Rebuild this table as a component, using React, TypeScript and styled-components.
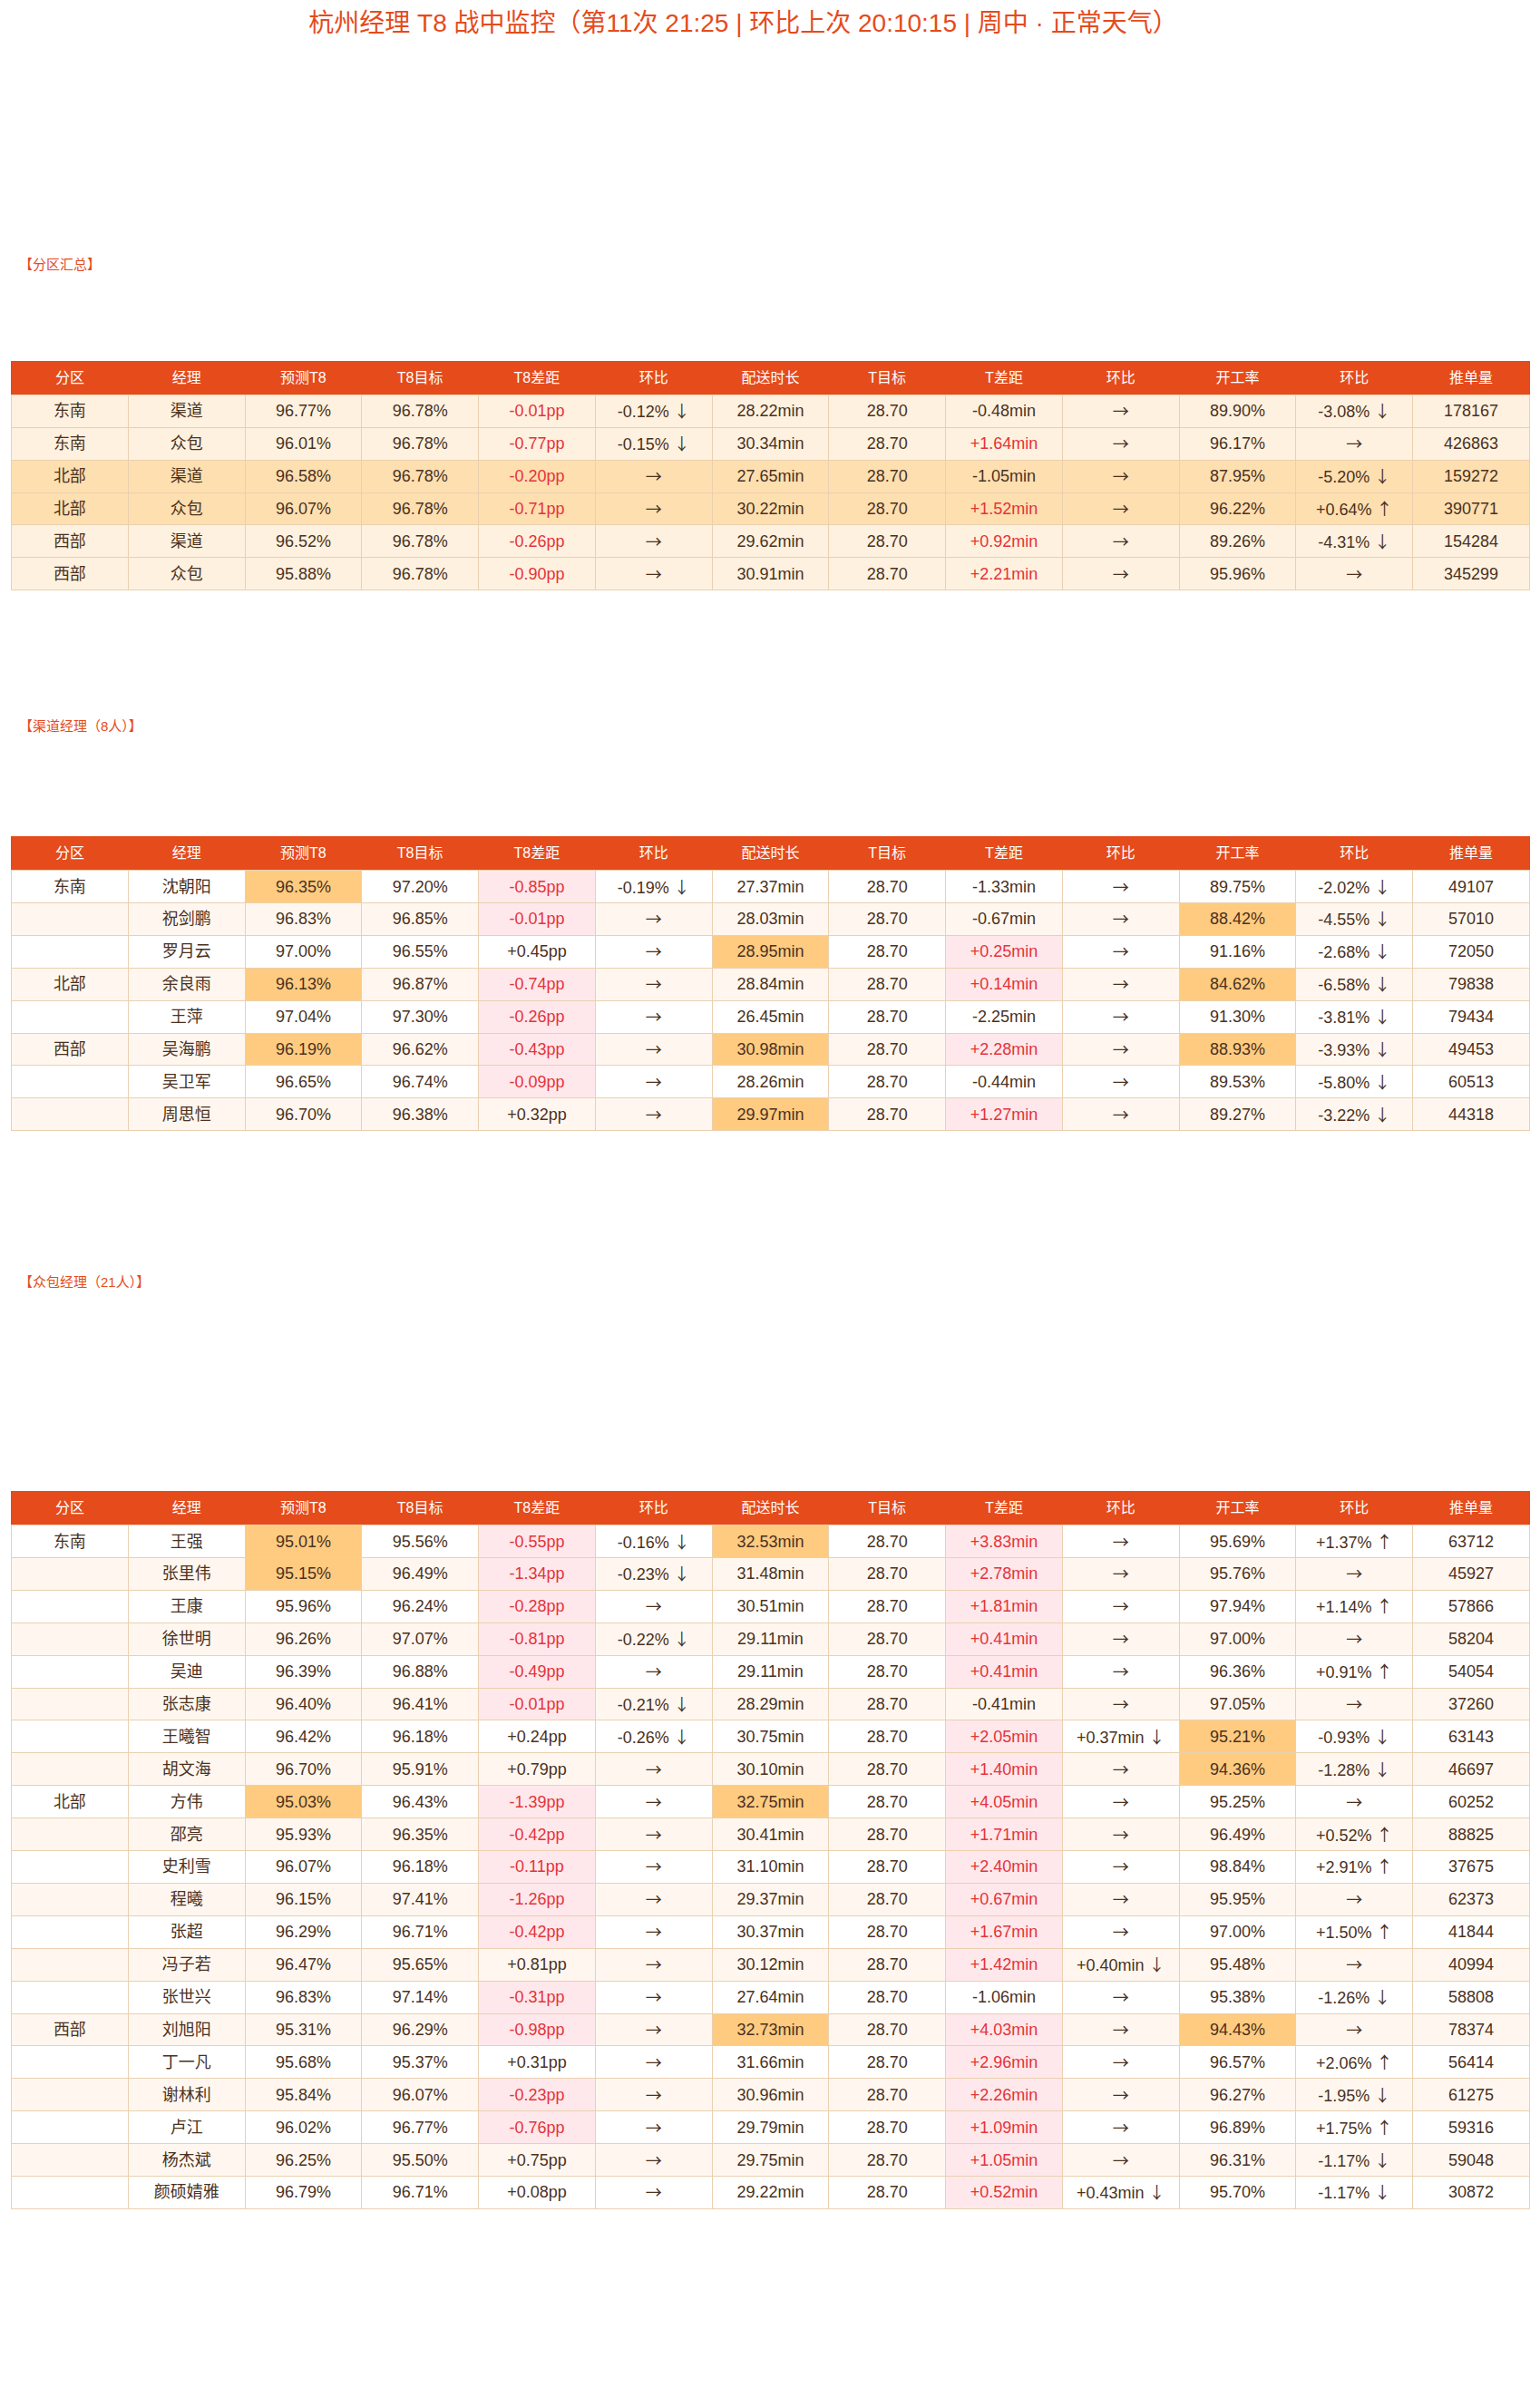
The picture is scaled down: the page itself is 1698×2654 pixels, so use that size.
import React from "react";
import styled, { createGlobalStyle, css } from "styled-components";

const GlobalStyle = createGlobalStyle`
	html, body {
		margin: 0;
		padding: 0;
		background: #ffffff;
	}
	body {
		font-family: "Liberation Sans", "Noto Sans CJK SC", sans-serif;
		color: #4a3122;
	}
`;

const ORANGE = "#e54b1b";

const Page = styled.div`
	width: 1698px;
	min-height: 2654px;
	box-sizing: border-box;
	padding: 10px 11px 0 12px;
`;

const Title = styled.h1`
	margin: 0;
	padding-right: 60px;
	text-align: center;
	font-size: 28px;
	line-height: 32px;
	font-weight: normal;
	color: ${ORANGE};
`;

const Section = styled.section<{ $above: number }>`
	margin-top: ${(p) => p.$above}px;
`;

const Label = styled.div<{ $below: number }>`
	padding-left: 9px;
	font-size: 15px;
	line-height: 20px;
	color: ${ORANGE};
	margin-bottom: ${(p) => p.$below}px;
`;

const Table = styled.table`
	width: 100%;
	border-collapse: collapse;
	table-layout: fixed;
	font-size: 18px;
	line-height: 20px;
`;

const HeadCell = styled.th`
	height: 35.9px;
	padding: 0;
	background: ${ORANGE};
	color: #ffffff;
	font-weight: normal;
	font-size: 16px;
	border: 1px solid ${ORANGE};
	border-bottom-color: #ecd2b2;
`;

const Row = styled.tr<{ $bg: string }>`
	height: 35.9px;
	background: ${(p) => p.$bg};
`;

const Cell = styled.td<{ $mark?: "hot" | "warn" | "red" }>`
	padding: 0;
	text-align: center;
	white-space: nowrap;
	border: 1px solid #ead0b0;
	color: #4a3122;
	${(p) =>
		p.$mark === "hot" &&
		css`
			background: #fecb80;
		`}
	${(p) =>
		p.$mark === "warn" &&
		css`
			background: #fee8eb;
			color: #e5333a;
		`}
	${(p) =>
		p.$mark === "red" &&
		css`
			color: #e5333a;
		`}
`;

const Arrow = styled.span`
	font-family: "Noto Sans CJK SC", sans-serif;
	font-size: 18px;
	line-height: 20px;
`;

const HEADERS = [
	"分区",
	"经理",
	"预测T8",
	"T8目标",
	"T8差距",
	"环比",
	"配送时长",
	"T目标",
	"T差距",
	"环比",
	"开工率",
	"环比",
	"推单量",
];

// summary rows: cells + tone
const SUMMARY: { cells: string[]; deep?: boolean }[] = [
	{ cells: ["东南", "渠道", "96.77%", "96.78%", "-0.01pp", "-0.12% ↓", "28.22min", "28.70", "-0.48min", "→", "89.90%", "-3.08% ↓", "178167"] },
	{ cells: ["东南", "众包", "96.01%", "96.78%", "-0.77pp", "-0.15% ↓", "30.34min", "28.70", "+1.64min", "→", "96.17%", "→", "426863"] },
	{ cells: ["北部", "渠道", "96.58%", "96.78%", "-0.20pp", "→", "27.65min", "28.70", "-1.05min", "→", "87.95%", "-5.20% ↓", "159272"], deep: true },
	{ cells: ["北部", "众包", "96.07%", "96.78%", "-0.71pp", "→", "30.22min", "28.70", "+1.52min", "→", "96.22%", "+0.64% ↑", "390771"], deep: true },
	{ cells: ["西部", "渠道", "96.52%", "96.78%", "-0.26pp", "→", "29.62min", "28.70", "+0.92min", "→", "89.26%", "-4.31% ↓", "154284"] },
	{ cells: ["西部", "众包", "95.88%", "96.78%", "-0.90pp", "→", "30.91min", "28.70", "+2.21min", "→", "95.96%", "→", "345299"] },
];

type ManagerRow = { cells: string[]; hot?: number[] };

const CHANNEL: ManagerRow[] = [
	{ cells: ["东南", "沈朝阳", "96.35%", "97.20%", "-0.85pp", "-0.19% ↓", "27.37min", "28.70", "-1.33min", "→", "89.75%", "-2.02% ↓", "49107"], hot: [2] },
	{ cells: ["", "祝剑鹏", "96.83%", "96.85%", "-0.01pp", "→", "28.03min", "28.70", "-0.67min", "→", "88.42%", "-4.55% ↓", "57010"], hot: [10] },
	{ cells: ["", "罗月云", "97.00%", "96.55%", "+0.45pp", "→", "28.95min", "28.70", "+0.25min", "→", "91.16%", "-2.68% ↓", "72050"], hot: [6] },
	{ cells: ["北部", "余良雨", "96.13%", "96.87%", "-0.74pp", "→", "28.84min", "28.70", "+0.14min", "→", "84.62%", "-6.58% ↓", "79838"], hot: [2, 10] },
	{ cells: ["", "王萍", "97.04%", "97.30%", "-0.26pp", "→", "26.45min", "28.70", "-2.25min", "→", "91.30%", "-3.81% ↓", "79434"] },
	{ cells: ["西部", "吴海鹏", "96.19%", "96.62%", "-0.43pp", "→", "30.98min", "28.70", "+2.28min", "→", "88.93%", "-3.93% ↓", "49453"], hot: [2, 6, 10] },
	{ cells: ["", "吴卫军", "96.65%", "96.74%", "-0.09pp", "→", "28.26min", "28.70", "-0.44min", "→", "89.53%", "-5.80% ↓", "60513"] },
	{ cells: ["", "周思恒", "96.70%", "96.38%", "+0.32pp", "→", "29.97min", "28.70", "+1.27min", "→", "89.27%", "-3.22% ↓", "44318"], hot: [6] },
];

const CROWD: ManagerRow[] = [
	{ cells: ["东南", "王强", "95.01%", "95.56%", "-0.55pp", "-0.16% ↓", "32.53min", "28.70", "+3.83min", "→", "95.69%", "+1.37% ↑", "63712"], hot: [2, 6] },
	{ cells: ["", "张里伟", "95.15%", "96.49%", "-1.34pp", "-0.23% ↓", "31.48min", "28.70", "+2.78min", "→", "95.76%", "→", "45927"], hot: [2] },
	{ cells: ["", "王康", "95.96%", "96.24%", "-0.28pp", "→", "30.51min", "28.70", "+1.81min", "→", "97.94%", "+1.14% ↑", "57866"] },
	{ cells: ["", "徐世明", "96.26%", "97.07%", "-0.81pp", "-0.22% ↓", "29.11min", "28.70", "+0.41min", "→", "97.00%", "→", "58204"] },
	{ cells: ["", "吴迪", "96.39%", "96.88%", "-0.49pp", "→", "29.11min", "28.70", "+0.41min", "→", "96.36%", "+0.91% ↑", "54054"] },
	{ cells: ["", "张志康", "96.40%", "96.41%", "-0.01pp", "-0.21% ↓", "28.29min", "28.70", "-0.41min", "→", "97.05%", "→", "37260"] },
	{ cells: ["", "王曦智", "96.42%", "96.18%", "+0.24pp", "-0.26% ↓", "30.75min", "28.70", "+2.05min", "+0.37min ↓", "95.21%", "-0.93% ↓", "63143"], hot: [10] },
	{ cells: ["", "胡文海", "96.70%", "95.91%", "+0.79pp", "→", "30.10min", "28.70", "+1.40min", "→", "94.36%", "-1.28% ↓", "46697"], hot: [10] },
	{ cells: ["北部", "方伟", "95.03%", "96.43%", "-1.39pp", "→", "32.75min", "28.70", "+4.05min", "→", "95.25%", "→", "60252"], hot: [2, 6] },
	{ cells: ["", "邵亮", "95.93%", "96.35%", "-0.42pp", "→", "30.41min", "28.70", "+1.71min", "→", "96.49%", "+0.52% ↑", "88825"] },
	{ cells: ["", "史利雪", "96.07%", "96.18%", "-0.11pp", "→", "31.10min", "28.70", "+2.40min", "→", "98.84%", "+2.91% ↑", "37675"] },
	{ cells: ["", "程曦", "96.15%", "97.41%", "-1.26pp", "→", "29.37min", "28.70", "+0.67min", "→", "95.95%", "→", "62373"] },
	{ cells: ["", "张超", "96.29%", "96.71%", "-0.42pp", "→", "30.37min", "28.70", "+1.67min", "→", "97.00%", "+1.50% ↑", "41844"] },
	{ cells: ["", "冯子若", "96.47%", "95.65%", "+0.81pp", "→", "30.12min", "28.70", "+1.42min", "+0.40min ↓", "95.48%", "→", "40994"] },
	{ cells: ["", "张世兴", "96.83%", "97.14%", "-0.31pp", "→", "27.64min", "28.70", "-1.06min", "→", "95.38%", "-1.26% ↓", "58808"] },
	{ cells: ["西部", "刘旭阳", "95.31%", "96.29%", "-0.98pp", "→", "32.73min", "28.70", "+4.03min", "→", "94.43%", "→", "78374"], hot: [6, 10] },
	{ cells: ["", "丁一凡", "95.68%", "95.37%", "+0.31pp", "→", "31.66min", "28.70", "+2.96min", "→", "96.57%", "+2.06% ↑", "56414"] },
	{ cells: ["", "谢林利", "95.84%", "96.07%", "-0.23pp", "→", "30.96min", "28.70", "+2.26min", "→", "96.27%", "-1.95% ↓", "61275"] },
	{ cells: ["", "卢江", "96.02%", "96.77%", "-0.76pp", "→", "29.79min", "28.70", "+1.09min", "→", "96.89%", "+1.75% ↑", "59316"] },
	{ cells: ["", "杨杰斌", "96.25%", "95.50%", "+0.75pp", "→", "29.75min", "28.70", "+1.05min", "→", "96.31%", "-1.17% ↓", "59048"] },
	{ cells: ["", "颜硕婧雅", "96.79%", "96.71%", "+0.08pp", "→", "29.22min", "28.70", "+0.52min", "+0.43min ↓", "95.70%", "-1.17% ↓", "30872"] },
];

// a gap is bad when T8 falls short or delivery time runs over
const isBad = (col: number, value: string) =>
	(col === 4 && value.startsWith("-")) || (col === 8 && value.startsWith("+"));

// split a trailing arrow off so it can use the thinner CJK glyph
const renderValue = (value: string) => {
	const m = value.match(/^(.*?)([↑↓→])$/);
	if (!m) return value;
	return (
		<>
			{m[1]}
			<Arrow>{m[2]}</Arrow>
		</>
	);
};

const Head = () => (
	<thead>
		<tr>
			{HEADERS.map((h, i) => (
				<HeadCell key={i}>{h}</HeadCell>
			))}
		</tr>
	</thead>
);

const SummaryTable = () => (
	<Table>
		<Head />
		<tbody>
			{SUMMARY.map((row, r) => (
				<Row key={r} $bg={row.deep ? "#fedfb0" : "#fef1df"}>
					{row.cells.map((v, c) => (
						<Cell key={c} $mark={isBad(c, v) ? "red" : undefined}>
							{renderValue(v)}
						</Cell>
					))}
				</Row>
			))}
		</tbody>
	</Table>
);

const ManagerTable = ({ rows }: { rows: ManagerRow[] }) => (
	<Table>
		<Head />
		<tbody>
			{rows.map((row, r) => (
				<Row key={r} $bg={r % 2 ? "#fff7ef" : "#ffffff"}>
					{row.cells.map((v, c) => {
						const mark = row.hot?.includes(c) ? "hot" : isBad(c, v) ? "warn" : undefined;
						return (
							<Cell key={c} $mark={mark}>
								{renderValue(v)}
							</Cell>
						);
					})}
				</Row>
			))}
		</tbody>
	</Table>
);

export default function App() {
	return (
		<Page>
			<GlobalStyle />
			<Title>杭州经理 T8 战中监控（第11次 21:25 | 环比上次 20:10:15 | 周中 · 正常天气）</Title>

			<Section $above={240}>
				<Label $below={96}>【分区汇总】</Label>
				<SummaryTable />
			</Section>

			<Section $above={140}>
				<Label $below={111}>【渠道经理（8人）】</Label>
				<ManagerTable rows={CHANNEL} />
			</Section>

			<Section $above={157}>
				<Label $below={220}>【众包经理（21人）】</Label>
				<ManagerTable rows={CROWD} />
			</Section>
		</Page>
	);
}
